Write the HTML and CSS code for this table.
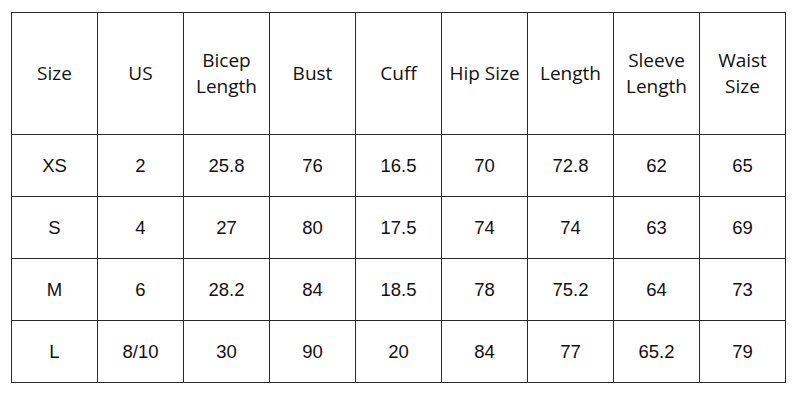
FILE: index.html
```html
<!DOCTYPE html>
<html>
<head>
<meta charset="utf-8">
<link rel="stylesheet" href="styles.css">
</head>
<body>
<table class="size-table">
  <thead>
    <tr>
      <th>Size</th><th>US</th><th>Bicep<br>Length</th><th>Bust</th><th>Cuff</th><th>Hip Size</th><th>Length</th><th>Sleeve<br>Length</th><th>Waist<br>Size</th>
    </tr>
  </thead>
  <tbody>
    <tr><td>XS</td><td>2</td><td>25.8</td><td>76</td><td>16.5</td><td>70</td><td>72.8</td><td>62</td><td>65</td></tr>
    <tr><td>S</td><td>4</td><td>27</td><td>80</td><td>17.5</td><td>74</td><td>74</td><td>63</td><td>69</td></tr>
    <tr><td>M</td><td>6</td><td>28.2</td><td>84</td><td>18.5</td><td>78</td><td>75.2</td><td>64</td><td>73</td></tr>
    <tr><td>L</td><td>8/10</td><td>30</td><td>90</td><td>20</td><td>84</td><td>77</td><td>65.2</td><td>79</td></tr>
  </tbody>
</table>
</body>
</html>
```
FILE: styles.css
```css
html, body {
  margin: 0;
  background: #ffffff;
}
body {
  padding: 12px 0 0 11px;
}
.size-table {
  border-collapse: collapse;
  table-layout: fixed;
  color: #111;
}
.size-table th,
.size-table td {
  border: 1px solid #2a2a2a;
  width: 85px;
  padding: 0;
  text-align: center;
  vertical-align: middle;
}
.size-table th {
  height: 119px;
  padding-bottom: 2px;
  font-family: "Open Sans", "Noto Sans", sans-serif;
  font-weight: 400;
  font-size: 19px;
  line-height: 26px;
}
.size-table td {
  height: 61px;
  font-family: "Liberation Sans", Arial, sans-serif;
  font-size: 18.5px;
}
```
